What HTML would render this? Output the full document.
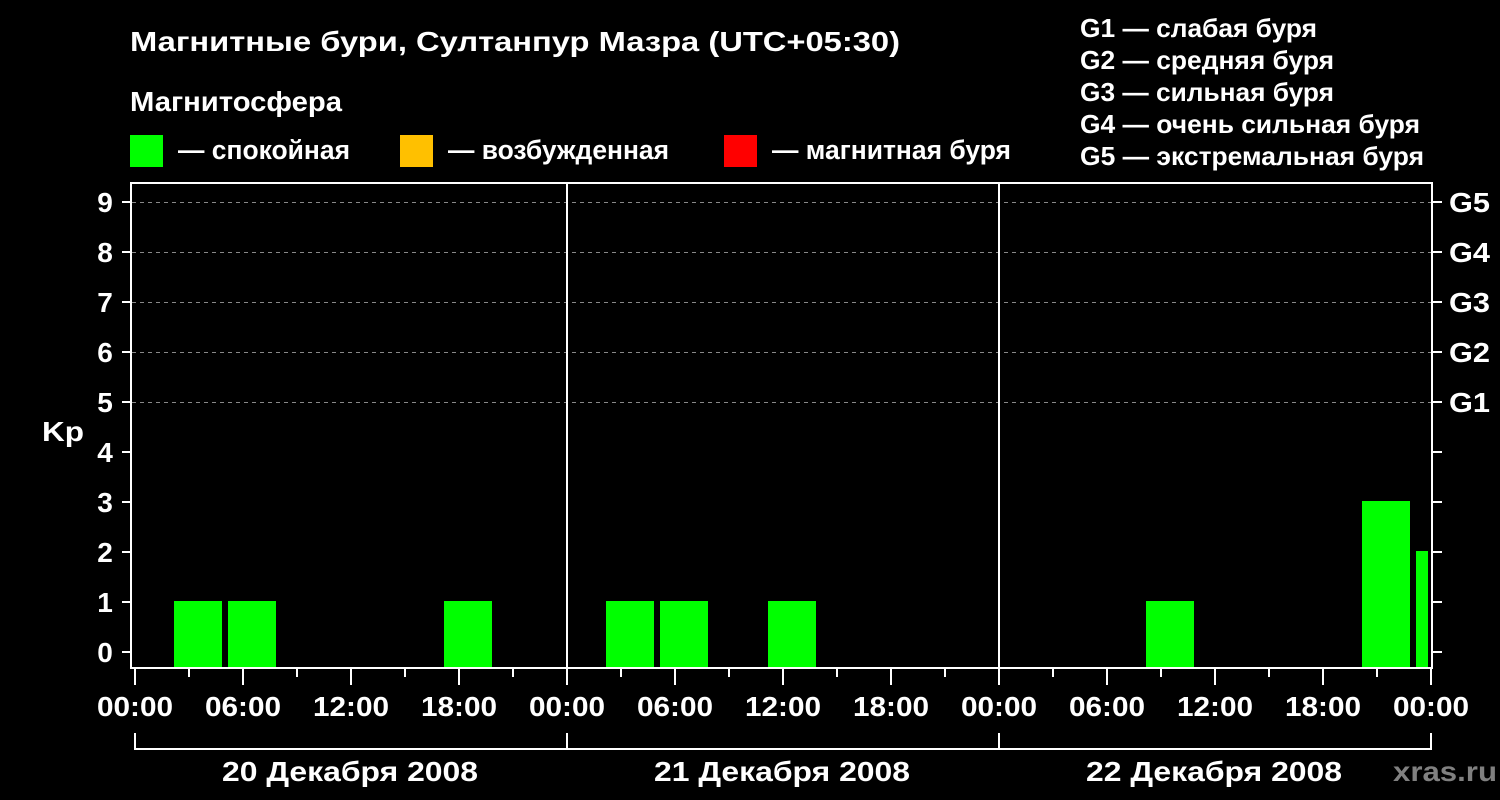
<!DOCTYPE html>
<html><head><meta charset="utf-8"><style>
html,body{margin:0;padding:0;background:#000;}
svg{display:block;}
text{font-family:"Liberation Sans",sans-serif;font-weight:bold;fill:#fff;}
</style></head><body>
<svg width="1500" height="800" xmlns="http://www.w3.org/2000/svg">
<rect width="1500" height="800" fill="#000"/>
<text x="130" y="51" font-size="28" textLength="770" lengthAdjust="spacingAndGlyphs">Магнитные бури, Султанпур Мазра (UTC+05:30)</text>
<text x="130" y="111" font-size="28" textLength="212" lengthAdjust="spacingAndGlyphs">Магнитосфера</text>
<rect x="130" y="135" width="33" height="32" fill="#00ff00"/>
<text x="178" y="159" font-size="27" textLength="172" lengthAdjust="spacingAndGlyphs">— спокойная</text>
<rect x="400" y="135" width="33" height="32" fill="#ffc000"/>
<text x="448" y="159" font-size="27" textLength="221" lengthAdjust="spacingAndGlyphs">— возбужденная</text>
<rect x="724" y="135" width="33" height="32" fill="#ff0000"/>
<text x="772" y="159" font-size="27" textLength="239" lengthAdjust="spacingAndGlyphs">— магнитная буря</text>
<g font-size="26">
<text x="1080" y="37" textLength="237" lengthAdjust="spacingAndGlyphs">G1 — слабая буря</text>
<text x="1080" y="69" textLength="254" lengthAdjust="spacingAndGlyphs">G2 — средняя буря</text>
<text x="1080" y="101" textLength="254" lengthAdjust="spacingAndGlyphs">G3 — сильная буря</text>
<text x="1080" y="133" textLength="340" lengthAdjust="spacingAndGlyphs">G4 — очень сильная буря</text>
<text x="1080" y="165" textLength="344" lengthAdjust="spacingAndGlyphs">G5 — экстремальная буря</text>
</g>
<g stroke="#888" stroke-dasharray="4,4" stroke-width="1">
<line x1="132" x2="1431" y1="202.5" y2="202.5"/>
<line x1="132" x2="1431" y1="252.5" y2="252.5"/>
<line x1="132" x2="1431" y1="302.5" y2="302.5"/>
<line x1="132" x2="1431" y1="352.5" y2="352.5"/>
<line x1="132" x2="1431" y1="402.5" y2="402.5"/>
</g>
<g fill="#00ff00">
<rect x="174" y="601" width="48" height="67"/>
<rect x="228" y="601" width="48" height="67"/>
<rect x="444" y="601" width="48" height="67"/>
<rect x="606" y="601" width="48" height="67"/>
<rect x="660" y="601" width="48" height="67"/>
<rect x="768" y="601" width="48" height="67"/>
<rect x="1146" y="601" width="48" height="67"/>
<rect x="1362" y="501" width="48" height="167"/>
<rect x="1416" y="551" width="12" height="117"/>
</g>
<g stroke="#fff" stroke-width="2" fill="none">
<rect x="131" y="183" width="1301" height="485"/>
<line x1="567" y1="183" x2="567" y2="668"/>
<line x1="999" y1="183" x2="999" y2="668"/>
</g>
<g stroke="#fff" stroke-width="2">
<line x1="122" x2="131" y1="202" y2="202"/><line x1="122" x2="131" y1="252" y2="252"/>
<line x1="122" x2="131" y1="302" y2="302"/><line x1="122" x2="131" y1="352" y2="352"/>
<line x1="122" x2="131" y1="402" y2="402"/><line x1="122" x2="131" y1="452" y2="452"/>
<line x1="122" x2="131" y1="502" y2="502"/><line x1="122" x2="131" y1="552" y2="552"/>
<line x1="122" x2="131" y1="602" y2="602"/><line x1="122" x2="131" y1="652" y2="652"/>
<line x1="1432" x2="1442" y1="202" y2="202"/><line x1="1432" x2="1442" y1="252" y2="252"/>
<line x1="1432" x2="1442" y1="302" y2="302"/><line x1="1432" x2="1442" y1="352" y2="352"/>
<line x1="1432" x2="1442" y1="402" y2="402"/><line x1="1432" x2="1442" y1="452" y2="452"/>
<line x1="1432" x2="1442" y1="502" y2="502"/><line x1="1432" x2="1442" y1="552" y2="552"/>
<line x1="1432" x2="1442" y1="602" y2="602"/><line x1="1432" x2="1442" y1="652" y2="652"/>
</g>
<g font-size="28" text-anchor="middle">
<text x="105" y="212">9</text><text x="105" y="262">8</text><text x="105" y="312">7</text>
<text x="105" y="362">6</text><text x="105" y="412">5</text><text x="105" y="462">4</text>
<text x="105" y="512">3</text><text x="105" y="562">2</text><text x="105" y="612">1</text>
<text x="105" y="662">0</text>
</g>
<text x="42" y="441" font-size="28" textLength="42" lengthAdjust="spacingAndGlyphs">Kp</text>
<g font-size="28">
<text x="1449" y="212" textLength="41" lengthAdjust="spacingAndGlyphs">G5</text>
<text x="1449" y="262" textLength="41" lengthAdjust="spacingAndGlyphs">G4</text>
<text x="1449" y="312" textLength="41" lengthAdjust="spacingAndGlyphs">G3</text>
<text x="1449" y="362" textLength="41" lengthAdjust="spacingAndGlyphs">G2</text>
<text x="1449" y="412" textLength="41" lengthAdjust="spacingAndGlyphs">G1</text>
</g>
<g stroke="#fff" stroke-width="2">
<line x1="135" x2="135" y1="669" y2="685"/><line x1="189" x2="189" y1="669" y2="677"/>
<line x1="243" x2="243" y1="669" y2="685"/><line x1="297" x2="297" y1="669" y2="677"/>
<line x1="351" x2="351" y1="669" y2="685"/><line x1="405" x2="405" y1="669" y2="677"/>
<line x1="459" x2="459" y1="669" y2="685"/><line x1="513" x2="513" y1="669" y2="677"/>
<line x1="567" x2="567" y1="669" y2="685"/><line x1="621" x2="621" y1="669" y2="677"/>
<line x1="675" x2="675" y1="669" y2="685"/><line x1="729" x2="729" y1="669" y2="677"/>
<line x1="783" x2="783" y1="669" y2="685"/><line x1="837" x2="837" y1="669" y2="677"/>
<line x1="891" x2="891" y1="669" y2="685"/><line x1="945" x2="945" y1="669" y2="677"/>
<line x1="999" x2="999" y1="669" y2="685"/><line x1="1053" x2="1053" y1="669" y2="677"/>
<line x1="1107" x2="1107" y1="669" y2="685"/><line x1="1161" x2="1161" y1="669" y2="677"/>
<line x1="1215" x2="1215" y1="669" y2="685"/><line x1="1269" x2="1269" y1="669" y2="677"/>
<line x1="1323" x2="1323" y1="669" y2="685"/><line x1="1377" x2="1377" y1="669" y2="677"/>
<line x1="1431" x2="1431" y1="669" y2="685"/>
</g>
<g font-size="28">
<text x="97" y="716" textLength="76" lengthAdjust="spacingAndGlyphs">00:00</text>
<text x="205" y="716" textLength="76" lengthAdjust="spacingAndGlyphs">06:00</text>
<text x="313" y="716" textLength="76" lengthAdjust="spacingAndGlyphs">12:00</text>
<text x="421" y="716" textLength="76" lengthAdjust="spacingAndGlyphs">18:00</text>
<text x="529" y="716" textLength="76" lengthAdjust="spacingAndGlyphs">00:00</text>
<text x="637" y="716" textLength="76" lengthAdjust="spacingAndGlyphs">06:00</text>
<text x="745" y="716" textLength="76" lengthAdjust="spacingAndGlyphs">12:00</text>
<text x="853" y="716" textLength="76" lengthAdjust="spacingAndGlyphs">18:00</text>
<text x="961" y="716" textLength="76" lengthAdjust="spacingAndGlyphs">00:00</text>
<text x="1069" y="716" textLength="76" lengthAdjust="spacingAndGlyphs">06:00</text>
<text x="1177" y="716" textLength="76" lengthAdjust="spacingAndGlyphs">12:00</text>
<text x="1285" y="716" textLength="76" lengthAdjust="spacingAndGlyphs">18:00</text>
<text x="1393" y="716" textLength="76" lengthAdjust="spacingAndGlyphs">00:00</text>
</g>
<g stroke="#fff" stroke-width="2" fill="none">
<polyline points="135,733 135,749 1431,749 1431,733"/>
<line x1="567" y1="733" x2="567" y2="749"/>
<line x1="999" y1="733" x2="999" y2="749"/>
</g>
<g font-size="28">
<text x="222" y="781" textLength="256" lengthAdjust="spacingAndGlyphs">20 Декабря 2008</text>
<text x="654" y="781" textLength="256" lengthAdjust="spacingAndGlyphs">21 Декабря 2008</text>
<text x="1086" y="781" textLength="256" lengthAdjust="spacingAndGlyphs">22 Декабря 2008</text>
</g>
<text x="1393" y="781" font-size="28" textLength="104" lengthAdjust="spacingAndGlyphs" style="fill:#808080">xras.ru</text>
</svg>
</body></html>
